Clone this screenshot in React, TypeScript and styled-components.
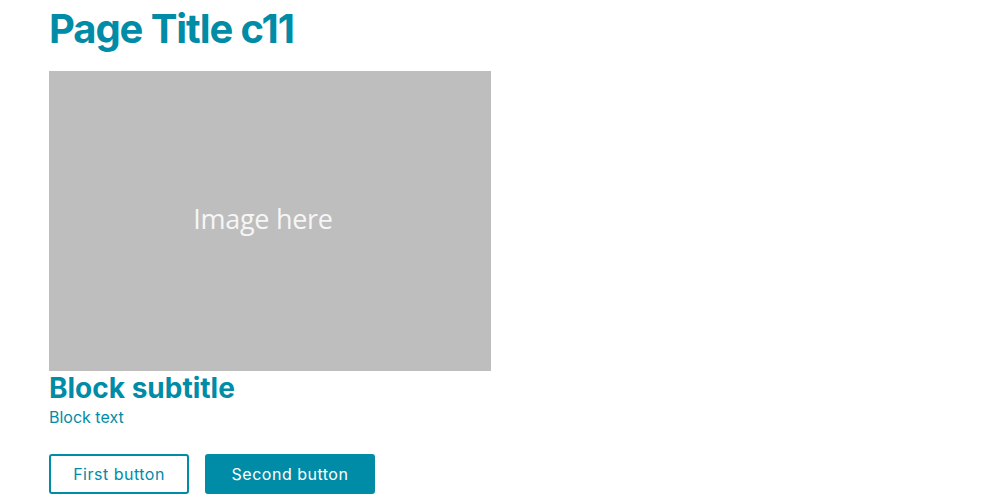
import React from "react";
import styled, { createGlobalStyle } from "styled-components";

const Global = createGlobalStyle`
  html, body { margin: 0; padding: 0; background: #ffffff; }
  body { font-family: "Inter", "Noto Sans", sans-serif; }
`;

const TEAL = "#008ca6";

const Page = styled.main`
  display: flex;
  flex-direction: column;
  align-items: flex-start;
  padding: 6px 0 0 49px;
`;

const Title = styled.h1`
  margin: 0;
  font-family: "Inter", sans-serif;
  font-weight: 700;
  font-size: 40px;
  line-height: 46px;
  color: ${TEAL};
  letter-spacing: -1.1px;
`;

const ImageBox = styled.div`
  margin-top: 19px;
  width: 442px;
  height: 300px;
  background: #bebebe;
  display: flex;
  align-items: center;
  justify-content: center;
`;

const ImageLabel = styled.span`
  font-family: "Open Sans", sans-serif;
  font-size: 27px;
  color: #f6f6f6;
  letter-spacing: -0.3px;
  transform: translate(-7px, -3px);
`;

const Subtitle = styled.h2`
  margin: 0;
  font-family: "Inter", sans-serif;
  font-weight: 700;
  font-size: 28px;
  line-height: 34px;
  color: ${TEAL};
  letter-spacing: 0;
`;

const BlockText = styled.p`
  margin: 2px 0 0;
  font-family: "Inter", sans-serif;
  font-size: 16px;
  line-height: 21px;
  color: ${TEAL};
`;

const Buttons = styled.div`
  display: flex;
  gap: 16px;
  margin-top: 26px;
`;

const Button = styled.button<{ $primary?: boolean }>`
  box-sizing: border-box;
  height: 40px;
  padding: 0;
  width: ${(p) => (p.$primary ? "170px" : "140px")};
  border: 2px solid ${TEAL};
  border-radius: 3px;
  background: ${(p) => (p.$primary ? TEAL : "#ffffff")};
  color: ${(p) => (p.$primary ? "#ffffff" : TEAL)};
  font-family: "Inter", sans-serif;
  font-size: 16px;
  letter-spacing: 0.5px;
  cursor: pointer;
`;

export default function App() {
  return (
    <>
      <Global />
      <Page>
        <Title>Page Title c11</Title>
        <ImageBox>
          <ImageLabel>Image here</ImageLabel>
        </ImageBox>
        <Subtitle>Block subtitle</Subtitle>
        <BlockText>Block text</BlockText>
        <Buttons>
          <Button>First button</Button>
          <Button $primary>Second button</Button>
        </Buttons>
      </Page>
    </>
  );
}
